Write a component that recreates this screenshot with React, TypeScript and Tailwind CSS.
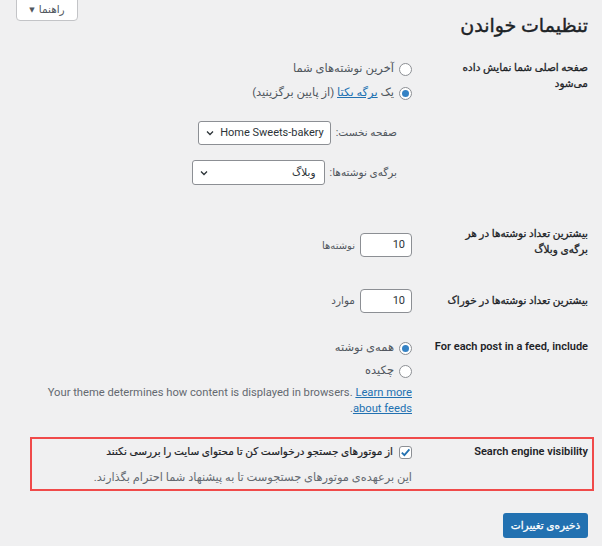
import React from "react";

function Radio({ checked }: { checked?: boolean }) {
  return (
    <span className="w-[13px] h-[13px] rounded-full border border-[#8c8f94] bg-white flex items-center justify-center shrink-0">
      {checked && <span className="w-[7px] h-[7px] rounded-full bg-[#3582c4]" />}
    </span>
  );
}

function Chevron() {
  return (
    <svg width="10" height="10" viewBox="0 0 10 10" className="shrink-0">
      <path d="M2 3.5 L5 6.5 L8 3.5" fill="none" stroke="#2c3338" strokeWidth="1.3" />
    </svg>
  );
}

export default function App() {
  return (
    <div
      dir="rtl"
      className="min-h-[546px] bg-[#f0f0f1] text-[11px] text-[#1d2327] pr-[14px] pl-[30px] [font-family:Roboto,'DejaVu_Sans',sans-serif]"
    >
      {/* header */}
      <div className="flex justify-between items-start">
        <h1 className="mt-[13px] text-[19px] leading-[26px] [-webkit-text-stroke:0.4px_#1d2327]">تنظیمات خواندن</h1>
        <button className="-ml-[14px] -mt-px h-[22px] w-[62px] bg-white border border-[#c3c4c7] rounded-b-[4px] flex items-center justify-center gap-1 text-[10.5px] text-[#50575e]">
          <span>راهنما</span>
          <span className="text-[7px]">▼</span>
        </button>
      </div>

      {/* front page */}
      <div className="flex mt-[21px]">
        <div className="w-[176px] shrink-0 text-[10.5px] leading-[16px] [-webkit-text-stroke:0.3px_#1d2327]">
          صفحه اصلی شما نمایش داده
          <br />
          می‌شود
        </div>
        <div className="flex-1 flex flex-col pt-[1px]">
          <label className="flex items-center gap-[5px] h-[16px] text-[11.5px] text-[#50575e]">
            <Radio />
            <span>آخرین نوشته‌های شما</span>
          </label>
          <label className="flex items-center gap-[5px] h-[16px] mt-[8px] text-[11.5px] text-[#50575e]">
            <Radio checked />
            <span>
              یک <a className="text-[#2271b1] underline">برگه یکتا</a> (از پایین برگزینید)
            </span>
          </label>
          <div className="flex items-center gap-[5px] mt-[20px] pr-[15px]">
            <span className="text-[10.5px] text-[#50575e]">صفحه نخست:</span>
            <div className="w-[133px] h-[24px] bg-white border border-[#8c8f94] rounded-[3px] flex items-center justify-between pr-[6px] pl-[6px] text-[#2c3338]">
              <span>Home Sweets-bakery</span>
              <Chevron />
            </div>
          </div>
          <div className="flex items-center gap-[5px] mt-[15px] pr-[15px]">
            <span className="text-[10.5px] text-[#50575e]">برگه‌ی نوشته‌ها:</span>
            <div className="w-[133px] h-[25px] bg-white border border-[#8c8f94] rounded-[3px] flex items-center justify-between pr-[8px] pl-[6px] text-[10.5px] text-[#2c3338]">
              <span>وبلاگ</span>
              <Chevron />
            </div>
          </div>
        </div>
      </div>

      {/* posts per page */}
      <div className="flex mt-[41px]">
        <div className="w-[176px] shrink-0 text-[10.5px] leading-[16px] [-webkit-text-stroke:0.3px_#1d2327]">
          بیشترین تعداد نوشته‌ها در هر
          <br />
          برگه‌ی وبلاگ
        </div>
        <div className="flex-1 flex items-center gap-[5px] pt-[7px] self-start">
          <div className="w-[52px] h-[24px] bg-white border border-[#8c8f94] rounded-[4px] flex items-center pr-[6px] text-[#2c3338]">
            10
          </div>
          <span className="text-[10px] text-[#50575e]">نوشته‌ها</span>
        </div>
      </div>

      {/* feed items */}
      <div className="flex mt-[31px] items-center">
        <div className="w-[176px] shrink-0 text-[10.5px] leading-[16px] [-webkit-text-stroke:0.3px_#1d2327]">
          بیشترین تعداد نوشته‌ها در خوراک
        </div>
        <div className="flex-1 flex items-center gap-[5px]">
          <div className="w-[52px] h-[24px] bg-white border border-[#8c8f94] rounded-[4px] flex items-center pr-[6px] text-[#2c3338]">
            10
          </div>
          <span className="text-[10.5px] text-[#50575e]">موارد</span>
        </div>
      </div>

      {/* feed content */}
      <div className="flex mt-[26px]">
        <div className="w-[176px] shrink-0 font-semibold leading-[16px]">For each post in a feed, include</div>
        <div className="flex-1 flex flex-col pt-px">
          <label className="flex items-center gap-[5px] h-[16px] text-[11.5px] text-[#50575e]">
            <Radio checked />
            <span>همه‌ی نوشته</span>
          </label>
          <label className="flex items-center gap-[5px] h-[16px] mt-[7px] text-[11.5px] text-[#50575e]">
            <Radio />
            <span>چکیده</span>
          </label>
          <p className="mt-[6px] leading-[16px] text-[11.2px] text-[#646970]">
            Your theme determines how content is displayed in browsers.{" "}
            <a className="text-[#2271b1] underline">
              Learn more
              <br />
              about feeds
            </a>
            .
          </p>
        </div>
      </div>

      {/* search engine visibility */}
      <div className="flex mt-[20px] -mr-[6px] border-2 border-[#f04a4a] pr-[4px] pt-[5px] pb-[4px]">
        <div className="w-[176px] shrink-0 font-semibold leading-[16px]">Search engine visibility</div>
        <div className="flex-1 flex flex-col">
          <label className="flex items-center gap-[6px] h-[16px] text-[10.5px] [-webkit-text-stroke:0.2px_#1d2327]">
            <span className="w-[13px] h-[13px] rounded-[3px] border border-[#8c8f94] bg-white flex items-center justify-center shrink-0">
              <svg width="11" height="11" viewBox="0 0 11 11">
                <path d="M1.8 5.6 L4.4 8.2 L9.4 2.4" fill="none" stroke="#2271b1" strokeWidth="1.8" />
              </svg>
            </span>
            <span>از موتورهای جستجو درخواست کن تا محتوای سایت را بررسی نکنند</span>
          </label>
          <p className="mt-[9px] leading-[16px] text-[11.4px] text-[#646970]">
            این برعهده‌ی موتورهای جستجوست تا به پیشنهاد شما احترام بگذارند.
          </p>
        </div>
      </div>

      {/* submit */}
      <div className="mt-[22px]">
        <button className="h-[25px] w-[85px] rounded-[3px] bg-[#2271b1] text-white text-[10.5px] [-webkit-text-stroke:0.3px_#ffffff]">
          ذخیره‌ی تغییرات
        </button>
      </div>
    </div>
  );
}
